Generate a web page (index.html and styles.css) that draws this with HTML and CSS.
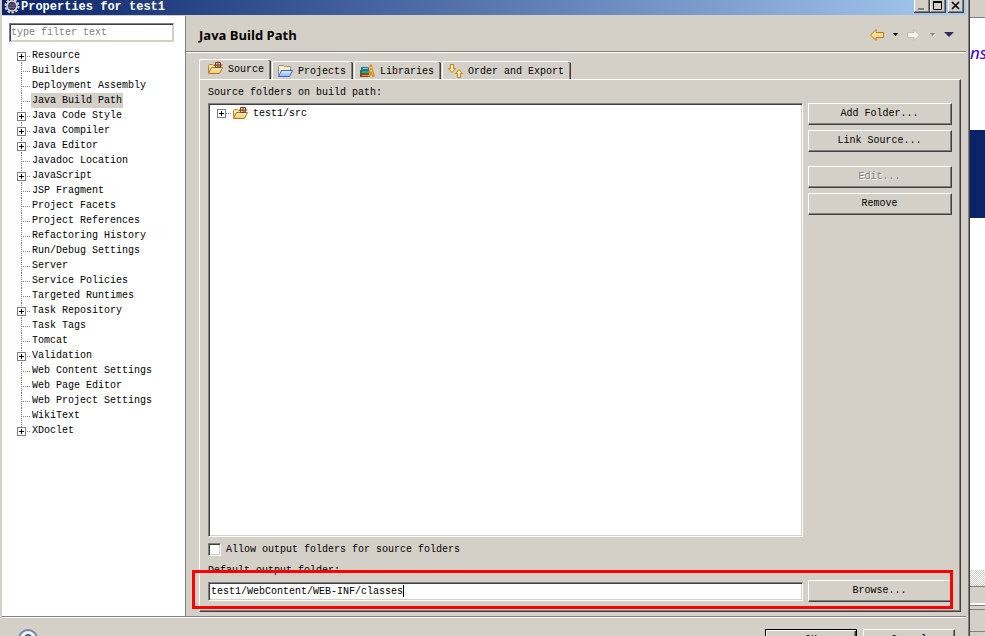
FILE: index.html
```html
<!DOCTYPE html>
<html lang="en">
<head>
<meta charset="utf-8">
<title>Properties for test1</title>
<link rel="stylesheet" href="styles.css">
</head>
<body>
<svg class="symbols" aria-hidden="true">
  <defs>
    <linearGradient id="gold" x1="0" y1="0" x2="0" y2="1"><stop offset="0" stop-color="#fff3c0"/><stop offset="1" stop-color="#f4c468"/></linearGradient>
    <linearGradient id="sky" x1="0" y1="0" x2="0" y2="1"><stop offset="0" stop-color="#e4f0ff"/><stop offset="1" stop-color="#8ab4f0"/></linearGradient>
    <symbol id="source-folder" viewBox="0 0 16 16">
      <path d="M1.500 11.500V4.500L2.500 3.500H5.500L6.500 4.500H12.500V7.500" fill="#fbe3a0" stroke="#c08030"/>
      <path d="M1.500 12.500L4.500 6.500H15.500L12.500 12.500Z" fill="url(#gold)" stroke="#b87424"/>
      <path d="M8.500 1.500H13.500V6.500H8.500ZM11 .5V7M7 4H15.500" fill="none" stroke="#80401c"/>
    </symbol>
    <symbol id="project-folder" viewBox="0 0 16 16">
      <path d="M1.500 11.500V2.500L2.500 1.500H6.500L7.500 2.500H13.500V6.500" fill="#fff0b8" stroke="#7c90c0"/>
      <path d="M1.500 12.500L4.500 6.500H15.500L12.500 12.500Z" fill="url(#sky)" stroke="#4068c8"/>
    </symbol>
    <symbol id="books" viewBox="0 0 16 16">
      <path d="M2 3H9L10 4V6H2Z" fill="#2878a8"/><path d="M4 4.500H9" stroke="#78d0e8"/>
      <path d="M1 6H10V10H1Z" fill="#207858"/><path d="M3 8H10" stroke="#70c8a0"/>
      <path d="M1 10H11V13H1Z" fill="#983c20"/><path d="M3 11.500H11" stroke="#e88c48"/>
      <path d="M11 1H12.500L13 4L15.500 12.500H13.500L12 8L11 12.500H9.500L11 6Z" fill="#f8ac20" stroke="#d07810" stroke-width=".7"/>
      <path d="M12 3V4M12 6V7" stroke="#fff0a0"/>
    </symbol>
    <symbol id="order" viewBox="0 0 16 16">
      <path d="M3.500 .5H6.500V4.500H8.500L5 8.500L1.500 4.500H3.500Z" fill="#fff0b0" stroke="#c08018"/>
      <path d="M10.500 13.500H13.500V9.500H15.500L12 5.500L8.500 9.500H10.500Z" fill="#fff0b0" stroke="#c08018"/>
    </symbol>
    <symbol id="arrow-left" viewBox="0 0 16 14">
      <path d="M1.500 7L7 1.500V4.500H14.500V9.500H7V12.500Z" fill="url(#gold)" stroke="#b87c10"/>
    </symbol>
    <symbol id="arrow-right" viewBox="0 0 16 14">
      <path d="M13.500 7L8 1.500V4.500H1.500V9.500H8V12.500Z" fill="#f0f0ec" stroke="#bcbcb8"/>
    </symbol>
  </defs>
</svg>

<div class="screen">
  <main class="dialog">
    <header class="titlebar">
      <svg class="app-icon" viewBox="0 0 16 14" aria-hidden="true">
        <circle cx="8" cy="6" r="6.500" fill="none" stroke="#d8d0d0" stroke-width="2" stroke-dasharray="2.500 1.500"/>
        <circle cx="8" cy="6" r="5" fill="#403858" stroke="#e4dcdc" stroke-width="1.500"/>
        <path d="M4 5H12M4 7.500H12" stroke="#70689a"/>
      </svg>
      <h1>Properties for test1</h1>
      <div class="window-buttons">
        <button type="button" aria-label="Minimize"><svg viewBox="0 0 14 12"><path d="M4 9H10" stroke="#808080" stroke-width="2"/></svg></button>
        <button type="button" aria-label="Maximize"><svg viewBox="0 0 14 12"><path d="M3.500 1.500H11.500V9.500H3.500Z" fill="none" stroke="#000"/><path d="M3 2H12" stroke="#000" stroke-width="2"/></svg></button>
        <button type="button" class="close" aria-label="Close"><svg viewBox="0 0 14 12"><path d="M4 2L11 9M11 2L4 9" stroke="#000" stroke-width="1.600"/></svg></button>
      </div>
    </header>

    <div class="columns">
      <nav class="sidebar">
        <input class="field filter" type="text" placeholder="type filter text" aria-label="Filter">
        <ul class="tree">
          <li><button class="expander" aria-label="Expand"></button><a href="#">Resource</a></li>
          <li><a href="#">Builders</a></li>
          <li><a href="#">Deployment Assembly</a></li>
          <li><a href="#" class="selected">Java Build Path</a></li>
          <li><button class="expander" aria-label="Expand"></button><a href="#">Java Code Style</a></li>
          <li><button class="expander" aria-label="Expand"></button><a href="#">Java Compiler</a></li>
          <li><button class="expander" aria-label="Expand"></button><a href="#">Java Editor</a></li>
          <li><a href="#">Javadoc Location</a></li>
          <li><button class="expander" aria-label="Expand"></button><a href="#">JavaScript</a></li>
          <li><a href="#">JSP Fragment</a></li>
          <li><a href="#">Project Facets</a></li>
          <li><a href="#">Project References</a></li>
          <li><a href="#">Refactoring History</a></li>
          <li><a href="#">Run/Debug Settings</a></li>
          <li><a href="#">Server</a></li>
          <li><a href="#">Service Policies</a></li>
          <li><a href="#">Targeted Runtimes</a></li>
          <li><button class="expander" aria-label="Expand"></button><a href="#">Task Repository</a></li>
          <li><a href="#">Task Tags</a></li>
          <li><a href="#">Tomcat</a></li>
          <li><button class="expander" aria-label="Expand"></button><a href="#">Validation</a></li>
          <li><a href="#">Web Content Settings</a></li>
          <li><a href="#">Web Page Editor</a></li>
          <li><a href="#">Web Project Settings</a></li>
          <li><a href="#">WikiText</a></li>
          <li><button class="expander" aria-label="Expand"></button><a href="#">XDoclet</a></li>
        </ul>
      </nav>

      <section class="page">
        <div class="page-header">
          <h2>Java Build Path</h2>
          <div class="history">
            <button type="button" aria-label="Back"><svg width="16" height="14"><use href="#arrow-left"/></svg></button>
            <button type="button" aria-label="Back history"><svg width="5" height="3"><path d="M0 0H5L2.500 3Z"/></svg></button>
            <button type="button" aria-label="Forward"><svg width="16" height="14"><use href="#arrow-right"/></svg></button>
            <button type="button" aria-label="Forward history"><svg width="6" height="4"><path d="M1 1H6L3.500 4Z" fill="#fff"/><path d="M0 0H5L2.500 3Z" fill="#848484"/></svg></button>
            <button type="button" aria-label="Menu"><svg width="10" height="5"><path d="M0 0H10L5 5Z" fill="#302c60"/></svg></button>
          </div>
        </div>

        <div class="tabs" role="tablist">
          <button type="button" role="tab" aria-selected="true" class="tab active"><svg width="16" height="16"><use href="#source-folder"/></svg>Source</button>
          <button type="button" role="tab" class="tab"><svg width="16" height="16"><use href="#project-folder"/></svg>Projects</button>
          <button type="button" role="tab" class="tab"><svg width="16" height="16"><use href="#books"/></svg>Libraries</button>
          <button type="button" role="tab" class="tab"><svg width="16" height="16"><use href="#order"/></svg>Order and Export</button>
        </div>

        <div class="panel">
          <p class="caption">Source folders on build path:</p>
          <div class="source-row">
            <div class="source-list">
              <button class="expander" aria-label="Expand"></button>
              <svg width="16" height="16" aria-hidden="true"><use href="#source-folder"/></svg>
              <span>test1/src</span>
            </div>
            <div class="actions">
              <button type="button" class="btn">Add Folder...</button>
              <button type="button" class="btn">Link Source...</button>
              <button type="button" class="btn second-group" disabled>Edit...</button>
              <button type="button" class="btn">Remove</button>
            </div>
          </div>
          <label class="check"><input type="checkbox">Allow output folders for source folders</label>
          <label class="caption output-caption" for="output">Default output folder:</label>
          <div class="output-row">
            <div class="output-field"><input class="field" id="output" type="text" value="test1/WebContent/WEB-INF/classes"></div>
            <button type="button" class="btn">Browse...</button>
          </div>
        </div>
      </section>
    </div>

    <footer class="footer">
      <button type="button" class="help" aria-label="Help">?</button>
      <button type="button" class="btn default">OK</button>
      <button type="button" class="btn">Cancel</button>
    </footer>
  </main>

  <aside class="behind">
    <div class="behind-bar"></div>
    <div class="behind-text">ns</div>
    <div class="behind-selection"></div>
    <div class="behind-blank"></div>
    <div class="behind-scroll"></div>
    <div class="behind-status"></div>
    <div class="behind-gap"></div>
    <div class="behind-task"></div>
  </aside>
</div>
</body>
</html>
```

FILE: styles.css
```css
:root {
  --face: #d4d0c8;
  --shade: #808080;
  --dark: #404040;
}

* { box-sizing: border-box; }

body {
  margin: 0;
  overflow: hidden;
  background: var(--face);
  color: #000;
  font: 10px/15px "Liberation Mono", monospace;
}

button, input { font: inherit; color: inherit; }
button { padding: 0; border: 0; background: none; }
h1, h2, p, ul { margin: 0; padding: 0; }
svg { display: block; flex: none; }
.symbols { position: absolute; width: 0; height: 0; }

.screen { display: flex; height: 100vh; }

.dialog {
  flex: 1;
  min-width: 0;
  display: flex;
  flex-direction: column;
  padding: 0 3px 0 2px;
  border-right: 1px solid var(--dark);
  box-shadow: inset -1px 0 var(--shade);
}

.titlebar {
  display: flex;
  align-items: flex-start;
  height: 15px;
  padding: 0 2px;
  background: linear-gradient(90deg, #0a246a, #a6caf0);
  color: #fff;
}
.app-icon { width: 16px; height: 14px; }
.titlebar h1 {
  flex: 1;
  padding-left: 1px;
  font-size: 12px;
  line-height: 14px;
}
.window-buttons { display: flex; }
.window-buttons button {
  width: 16px;
  height: 13px;
  background: var(--face);
  border: solid var(--dark);
  border-width: 0 1px 1px 0;
  box-shadow: inset 1px 0 #fff, inset -1px -1px var(--shade);
}
.window-buttons svg { width: 14px; height: 12px; }
.window-buttons .close { margin-left: 2px; }

.columns {
  flex: 1;
  min-height: 0;
  display: flex;
  border-bottom: 1px solid var(--shade);
  box-shadow: 0 1px #fff;
}

.sidebar {
  flex: 0 0 184px;
  margin-top: 1px;
  padding: 7px 11px 0 7px;
  background: #fff;
  border-right: 1px solid var(--shade);
}

.field {
  display: block;
  width: 100%;
  height: 19px;
  padding: 0 2px;
  background: #fff;
  border: 1px solid;
  border-color: var(--shade) #fff #fff var(--shade);
  border-radius: 0;
  outline: 0;
  box-shadow: inset 1px 1px var(--dark), inset -1px -1px var(--face);
}
.filter { padding: 0 1px; border-color: var(--shade) var(--face) var(--face) var(--shade); }
.field::placeholder { color: #808080; opacity: 1; }

.tree { margin: 6px 0 0 8px; list-style: none; }
.tree li {
  display: flex;
  align-items: center;
  height: 15px;
  padding-left: 14px;
  background:
    repeating-linear-gradient(0deg, var(--shade) 0 1px, transparent 1px 2px) 4px 0 / 1px 100% no-repeat,
    repeating-linear-gradient(90deg, var(--shade) 0 1px, transparent 1px 2px) 4px 8px / 9px 1px no-repeat;
}
.tree li:first-child { background-position: 4px 8px, 4px 8px; }
.tree li:last-child { background-position: 4px -7px, 4px 8px; }
.tree a {
  padding: 0 1px;
  color: inherit;
  text-decoration: none;
  white-space: nowrap;
}
.tree .selected { background: var(--face); }

.expander {
  flex: none;
  width: 9px;
  height: 9px;
  border: 1px solid var(--shade);
  background:
    linear-gradient(#000, #000) center / 5px 1px no-repeat,
    linear-gradient(#000, #000) center / 1px 5px no-repeat,
    #fff;
}
.tree .expander { margin: 1px 5px 0 -14px; }

.page {
  flex: 1;
  min-width: 0;
  display: flex;
  flex-direction: column;
  padding-bottom: 4px;
}

.page-header {
  display: flex;
  align-items: center;
  justify-content: space-between;
  height: 37px;
  margin-bottom: 7px;
  padding: 3px 12px 0 13px;
  border-bottom: 1px solid var(--shade);
  box-shadow: 0 1px #fff;
}
.page-header h2 { font: bold 13px/18px "Open Sans", sans-serif; }
.history { display: flex; align-items: center; gap: 8px; }

.tabs {
  display: flex;
  align-items: flex-end;
  gap: 1px;
  padding-left: 13px;
}
.tab {
  display: flex;
  align-items: center;
  gap: 5px;
  height: 18px;
  padding: 2px 7px 0 4px;
  border: solid #fff;
  border-width: 1px 0 0 1px;
  border-radius: 2px 2px 0 0;
  box-shadow: inset -1px 0 var(--dark), inset -2px 0 var(--shade);
}
.tab.active {
  height: 21px;
  margin-bottom: -1px;
  padding: 0 7px 2px 7px;
  background: var(--face);
}

.panel {
  flex: 1;
  min-height: 0;
  display: flex;
  flex-direction: column;
  margin: 0 5px 0 13px;
  padding: 5px 7px 8px 8px;
  border: 1px solid #fff;
  border-right-color: var(--dark);
  border-bottom-color: var(--dark);
  border-width: 1px 1px 1px 1px;
  box-shadow: inset -1px -1px var(--shade);
  padding-right: 8px;
  padding-bottom: 9px;
}
.caption { display: block; }
.source-row, .output-row { display: grid; grid-template-columns: 1fr 144px; gap: 5px; }
.source-row { flex: 1; margin-top: 3px; }
.source-list {
  display: flex;
  align-items: flex-start;
  padding: 2px 8px;
  background: #fff;
  border: 1px solid;
  border-color: var(--shade) #fff #fff var(--shade);
  box-shadow: inset 1px 1px var(--dark), inset -1px -1px var(--face);
}
.source-list .expander { margin-top: 3px; }
.source-list svg {
  width: 22px;
  padding-left: 6px;
  background: repeating-linear-gradient(90deg, var(--shade) 0 1px, transparent 1px 2px) 0 7px / 5px 1px no-repeat;
}
.source-list span { padding-left: 5px; }

.actions { display: flex; flex-direction: column; gap: 5px; }
.btn {
  height: 22px;
  padding: 0 1px 1px 0;
  background: var(--face);
  border: 1px solid;
  border-color: #fff var(--dark) var(--dark) #fff;
  box-shadow: inset -1px -1px var(--shade);
  text-align: center;
}
.btn:disabled { color: var(--shade); text-shadow: 1px 1px #fff; }
.second-group { margin-top: 9px; }

.check { display: flex; align-items: center; gap: 5px; margin-top: 5px; }
.check input {
  appearance: none;
  width: 13px;
  height: 13px;
  margin: 0;
  background: #fff;
  border: 1px solid;
  border-color: var(--shade) #fff #fff var(--shade);
  box-shadow: inset 1px 1px var(--dark), inset -1px -1px var(--face);
}
.output-caption { margin-top: 6px; }

.output-row { position: relative; align-items: center; margin-top: 2px; }
.output-row::after {
  content: "";
  position: absolute;
  inset: -10px -1px -7px -16px;
  border: 3px solid #f00;
  pointer-events: none;
}
.output-field { position: relative; }
.output-field::after {
  content: "";
  position: absolute;
  top: 3px;
  left: 195px;
  width: 1px;
  height: 12px;
  background: #000;
}

.footer {
  flex: 0 0 19px;
  display: flex;
  align-items: flex-start;
  gap: 6px;
  padding: 12px 11px 0 16px;
  overflow: hidden;
}
.footer .btn { width: 92px; flex: none; padding: 0 0 2px; }
.footer .default { border-color: #000; box-shadow: inset 1px 1px #fff, inset -1px -1px var(--dark), inset -2px -2px var(--shade); }
.help {
  flex: none;
  width: 20px;
  height: 20px;
  margin-right: auto;
  border: 2px solid #7084a4;
  border-radius: 50%;
  background: #f4f4f4;
  color: #506488;
  font: bold 14px/16px "Liberation Sans", sans-serif;
}

.behind {
  flex: 0 0 15px;
  display: flex;
  flex-direction: column;
  overflow: hidden;
  background: #fff;
}
.behind-bar { height: 18px; background: var(--face); border-bottom: 1px solid var(--shade); }
.behind-text {
  height: 112px;
  padding-top: 23px;
  color: #3c00f0;
  font: italic 17px/24px "Noto Sans", sans-serif;
}
.behind-selection { height: 88px; background: #0a246a; }
.behind-blank { flex: 1; }
.behind-scroll {
  height: 16px;
  background: repeating-conic-gradient(var(--face) 0 25%, #fff 0 50%) 0 0 / 2px 2px;
}
.behind-status { height: 17px; background: var(--face); border-top: 1px solid var(--shade); }
.behind-gap {
  height: 6px;
  background: var(--face);
  border-top: 2px solid #fff;
  box-shadow: inset 0 1px var(--shade);
}
.behind-task { height: 27px; background: var(--face); border-top: 1px solid var(--shade); box-shadow: inset 0 -4px var(--face), inset 0 -5px var(--shade); }
```
